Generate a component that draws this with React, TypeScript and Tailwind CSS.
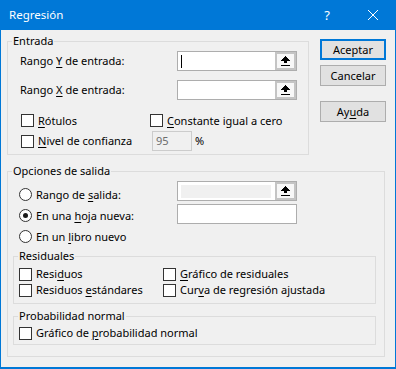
import React from "react";

function U({ children }: { children: React.ReactNode }) {
  return <span className="underline decoration-1 underline-offset-[2px]">{children}</span>;
}

function Box() {
  return <div className="w-[13px] h-[13px] shrink-0 border border-[#333333] bg-white" />;
}

function Check({ children }: { children: React.ReactNode }) {
  return (
    <div className="flex items-center gap-[4px] whitespace-nowrap">
      <Box />
      <span>{children}</span>
    </div>
  );
}

function Radio({ checked, children }: { checked?: boolean; children: React.ReactNode }) {
  return (
    <div className="flex items-center gap-[4px] whitespace-nowrap">
      <div className="w-[13px] h-[13px] shrink-0 rounded-full border border-[#333333] bg-white flex items-center justify-center">
        {checked ? <div className="w-[5px] h-[5px] rounded-full bg-[#1a1a1a]" /> : null}
      </div>
      <span>{children}</span>
    </div>
  );
}

function Arrow() {
  return (
    <svg width="9" height="10" viewBox="0 0 9 10" shapeRendering="crispEdges">
      <polygon points="4.5,0 9,5 6,5 6,7 3,7 3,5 0,5" fill="#000" />
      <rect x="0" y="9" width="9" height="1" fill="#000" />
    </svg>
  );
}

function RefInput({ cursor, disabled }: { cursor?: boolean; disabled?: boolean }) {
  return (
    <div className="w-[120px] h-[20px] border border-[#adadad] bg-white flex">
      <div className="flex-1 flex items-center pl-[3px] pr-[4px]">
        {cursor ? <div className="w-[1px] h-[13px] bg-black" /> : null}
        {disabled ? <div className="w-full h-[13px] bg-[#f0f0f0]" /> : null}
      </div>
      <div className="w-[21px] bg-[#c4c4c4] p-[2px]">
        <div className="w-full h-full bg-[#f7f7f7] flex items-center justify-center">
          <Arrow />
        </div>
      </div>
    </div>
  );
}

function Btn({ children, primary }: { children: React.ReactNode; primary?: boolean }) {
  return (
    <div
      className={
        primary
          ? "w-[66px] h-[21px] border-2 border-[#0078d7] bg-[#e1e1e1] flex items-center justify-center"
          : "w-[66px] h-[21px] border border-[#adadad] bg-[#e1e1e1] flex items-center justify-center"
      }
    >
      {children}
    </div>
  );
}

export default function App() {
  return (
    <div className="w-[396px] h-[369px] bg-[#0078d7] flex flex-col font-['Noto_Sans',sans-serif] text-[11px] leading-[16px] text-black">
      <div className="h-[30px] shrink-0 flex items-center text-white text-[11.5px]">
        <span className="ml-[9px]">Regresión</span>
        <div className="ml-auto w-[46px] h-full flex items-center justify-center text-[13px]">?</div>
        <div className="w-[46px] h-full flex items-center justify-center">
          <svg width="10" height="10" viewBox="0 0 10 10">
            <path d="M0 0 L10 10 M10 0 L0 10" stroke="#fff" strokeWidth="1" />
          </svg>
        </div>
      </div>
      <div className="flex-1 mx-[1px] mb-[2px] bg-[#f0f0f0] px-[6px]">
        <div className="flex items-start">
          <fieldset className="w-[302px] mt-[3px] border border-[#dcdcdc]">
            <legend className="ml-[4px] px-[1px]">Entrada</legend>
            <div className="pl-[12px] pt-[2px] pb-[3px]">
              <div className="flex items-center h-[20px]">
                <span className="w-[157px] whitespace-nowrap">
                  Rango <U>Y</U> de entrada:
                </span>
                <RefInput cursor />
              </div>
              <div className="flex items-center h-[20px] mt-[9px]">
                <span className="w-[157px] whitespace-nowrap">
                  Rango <U>X</U> de entrada:
                </span>
                <RefInput />
              </div>
              <div className="flex items-center h-[13px] mt-[14px]">
                <div className="w-[129px] ml-[1px]">
                  <Check>
                    <U>R</U>ótulos
                  </Check>
                </div>
                <Check>
                  <U>C</U>onstante igual a cero
                </Check>
              </div>
              <div className="flex items-center h-[20px] mt-[4px]">
                <div className="w-[131px] ml-[1px]">
                  <Check>
                    <U>N</U>ivel de confianza
                  </Check>
                </div>
                <div className="w-[40px] h-[20px] border border-[#cccccc] bg-[#f0f0f0] flex items-center pl-[3px] text-[#6d6d6d]">
                  95
                </div>
                <span className="ml-[3px]">%</span>
              </div>
            </div>
          </fieldset>
          <div className="ml-[11px] mt-[9px] flex flex-col">
            <Btn primary>Aceptar</Btn>
            <div className="mt-[5px]">
              <Btn>Cancelar</Btn>
            </div>
            <div className="mt-[15px]">
              <Btn>
                Ay<U>u</U>da
              </Btn>
            </div>
          </div>
        </div>
        <fieldset className="w-[378px] mt-[8px] border border-[#dcdcdc]">
          <legend className="ml-[4px] px-[1px]">Opciones de salida</legend>
          <div className="pb-[11px]">
            <div className="flex">
              <div className="w-[169px] pl-[11px] pt-[5px] flex flex-col">
                <div className="h-[21px] flex items-center">
                  <Radio>
                    Rango de <U>s</U>alida:
                  </Radio>
                </div>
                <div className="h-[21px] flex items-center">
                  <Radio checked>
                    En una <U>h</U>oja nueva:
                  </Radio>
                </div>
                <div className="h-[21px] flex items-center">
                  <Radio>
                    En un <U>l</U>ibro nuevo
                  </Radio>
                </div>
              </div>
              <div className="pt-[2px] flex flex-col">
                <RefInput disabled />
                <div className="mt-[3px] w-[120px] h-[20px] border border-[#adadad] bg-white" />
              </div>
            </div>
            <fieldset className="ml-[5px] mt-[1px] w-[363px] border border-[#dcdcdc]">
              <legend className="ml-[4px] px-[1px]">Residuales</legend>
              <div className="pl-[5px] pt-[2px] pb-[5px]">
                <div className="flex items-center h-[16px]">
                  <div className="w-[144px]">
                    <Check>
                      Resi<U>d</U>uos
                    </Check>
                  </div>
                  <Check>
                    <U>G</U>ráfico de residuales
                  </Check>
                </div>
                <div className="flex items-center h-[16px]">
                  <div className="w-[144px]">
                    <Check>
                      Residuos <U>e</U>stándares
                    </Check>
                  </div>
                  <Check>
                    Cur<U>v</U>a de regresión ajustada
                  </Check>
                </div>
              </div>
            </fieldset>
            <fieldset className="ml-[5px] mt-[4px] w-[363px] border border-[#dcdcdc]">
              <legend className="ml-[4px] px-[1px]">Probabilidad normal</legend>
              <div className="pl-[5px] pt-[1px] pb-[3px]">
                <div className="flex items-center h-[16px]">
                  <Check>
                    Gráfico de <U>p</U>robabilidad normal
                  </Check>
                </div>
              </div>
            </fieldset>
          </div>
        </fieldset>
      </div>
    </div>
  );
}
